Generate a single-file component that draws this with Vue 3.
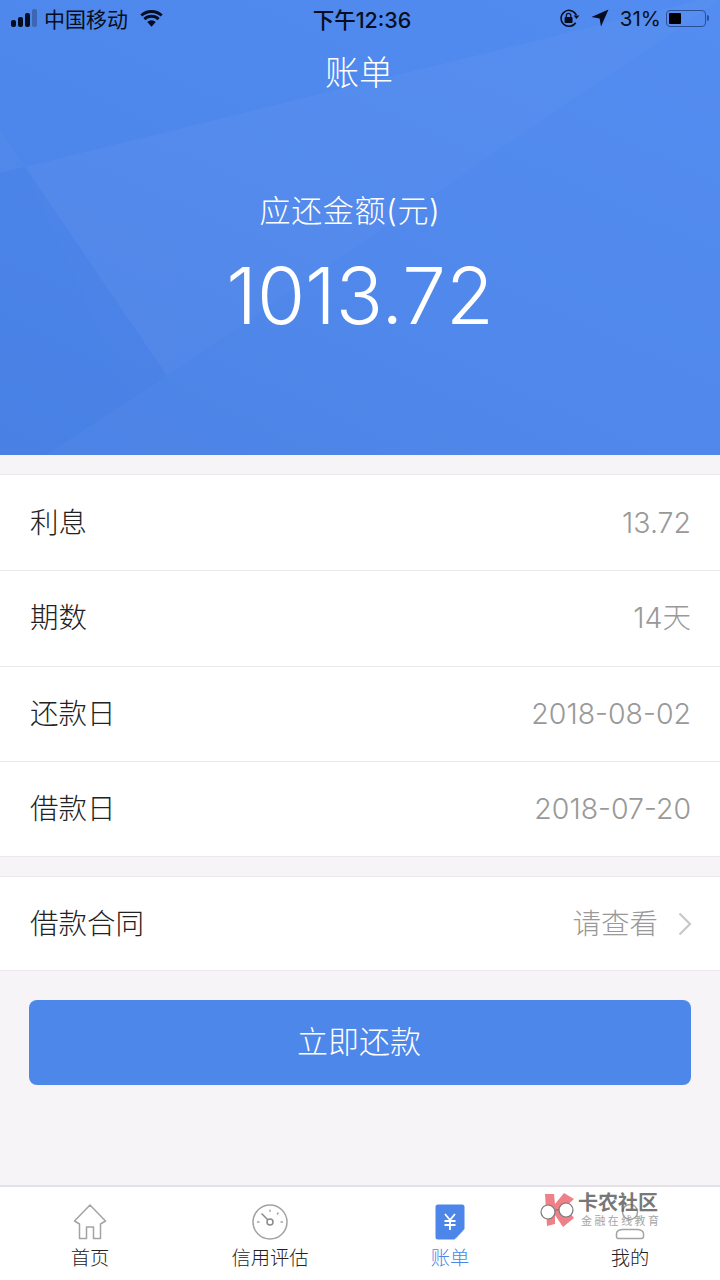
<script setup>
const rows = [
  { label: "利息", value: "13.72" },
  { label: "期数", value: "14天" },
  { label: "还款日", value: "2018-08-02" },
  { label: "借款日", value: "2018-07-20" },
];
</script>

<template>
  <div class="page">
    <header class="hero">
      <svg class="hero-bg" viewBox="0 0 720 455" preserveAspectRatio="none">
        <polygon points="25,167 700,0 720,0 167,376" fill="#fff" opacity="0.03" />
        <polygon points="0,130 25,167 0,173" fill="#fff" opacity="0.02" />
        <polygon points="0,173 25,167 167,376 45,455 0,455" fill="#2f6ad8" opacity="0.05" />
        <polygon points="720,0 167,376 45,455 720,455" fill="#fff" opacity="0.012" />
        <polygon points="175,130 175,340 167,376 130,400 25,167" fill="#fff" opacity="0.006" />
      </svg>

      <div class="status">
        <div class="status-left">
          <span class="signal"><i></i><i></i><i></i><i class="off"></i></span>
          <span class="carrier">中国移动</span>
          <svg class="wifi" viewBox="0 0 26 18">
            <path d="M13 18 L8.6 13.2 A6.4 6.4 0 0 1 17.4 13.2 Z" fill="#070d20" />
            <path d="M5.6 10.2 A10.6 10.6 0 0 1 20.4 10.2 M2.4 6.4 A15.4 15.4 0 0 1 23.6 6.4" fill="none" stroke="#070d20" stroke-width="3" />
          </svg>
        </div>
        <div class="clock">下午12:36</div>
        <div class="status-right">
          <svg class="lock" viewBox="0 0 22 20">
            <path d="M17.5 14.5 A8.4 8.4 0 1 1 18.2 6.5" fill="none" stroke="#070d20" stroke-width="1.6" />
            <path d="M15.4 6.8 L21.4 6.8 L18.4 10.6 Z" fill="#070d20" />
            <rect x="5.8" y="8.4" width="8.4" height="6.4" rx="1" fill="#070d20" />
            <path d="M7.6 8.6 V7 A2.4 2.4 0 0 1 12.4 7 V8.6" fill="none" stroke="#070d20" stroke-width="1.3" />
          </svg>
          <svg class="arrow" viewBox="0 0 18 18">
            <path d="M17.5 0.5 L0.5 8 L8.6 9.4 L10 17.5 Z" fill="#070d20" />
          </svg>
          <span class="percent">31%</span>
          <span class="battery"><span class="battery-fill"></span></span>
          <span class="battery-cap"></span>
        </div>
      </div>

      <h1 class="title">账单</h1>
      <div class="due-label">应还金额(元)</div>
      <div class="due-amount">1013.72</div>
    </header>

    <section class="group first">
      <div v-for="row in rows" :key="row.label" class="row">
        <span class="row-label">{{ row.label }}</span>
        <span class="row-value">{{ row.value }}</span>
      </div>
    </section>

    <section class="group second">
      <div class="row">
        <span class="row-label">借款合同</span>
        <span class="row-value">请查看</span>
        <svg class="chevron" viewBox="0 0 14 24">
          <path d="M1.5 1.5 L12 12 L1.5 22.5" fill="none" stroke="#c8c8c8" stroke-width="2.2" />
        </svg>
      </div>
    </section>

    <button class="pay"><span>立即还款</span></button>

    <nav class="tabbar">
      <div class="tab">
        <svg class="tab-icon" viewBox="0 0 34 36">
          <path d="M17 1 L32.5 17 L27.5 20 V34.5 H20.5 V23 H13.5 V34.5 H6.5 V20 L1.5 17 Z" fill="none" stroke="#a3a3a3" stroke-width="1.5" stroke-linejoin="round" />
        </svg>
        <span>首页</span>
      </div>
      <div class="tab">
        <svg class="tab-icon" viewBox="0 0 36 36">
          <circle cx="18" cy="18" r="17" fill="none" stroke="#a3a3a3" stroke-width="1.5" />
          <circle cx="18" cy="18" r="3" fill="none" stroke="#8a8a8a" stroke-width="1.5" />
          <path d="M15.8 15.8 L9.5 9.5" stroke="#8a8a8a" stroke-width="1.5" />
          <path d="M18 5.5 V8 M26.5 8.5 L25 10.5 M31 18 H28.5 M5 18 H7.5" stroke="#a3a3a3" stroke-width="1.3" />
        </svg>
        <span>信用评估</span>
      </div>
      <div class="tab active">
        <svg class="tab-icon" viewBox="0 0 30 36">
          <path d="M3 0.5 H27 A2.5 2.5 0 0 1 29.5 3 V25 L19.5 35.5 H3 A2.5 2.5 0 0 1 0.5 33 V3 A2.5 2.5 0 0 1 3 0.5 Z" fill="#4c86e8" />
          <path d="M28 27 L21 27.5 L21 35 Z" fill="#4c86e8" opacity="0.35" />
          <path d="M10 10 L15 16 L20 10 M15 16 V26 M9.5 17 H20.5 M9.5 21 H20.5" fill="none" stroke="#fff" stroke-width="1.8" />
        </svg>
        <span>账单</span>
      </div>
      <div class="tab">
        <svg class="tab-icon" viewBox="0 0 30 36">
          <circle cx="15" cy="8" r="7.5" fill="none" stroke="#a3a3a3" stroke-width="1.5" />
          <path d="M8 25.5 H22 A6.5 4 0 0 1 28.5 29.5 V32 A2 2 0 0 1 26.5 34.5 H3.5 A2 2 0 0 1 1.5 32 V29.5 A6.5 4 0 0 1 8 25.5 Z" fill="none" stroke="#a3a3a3" stroke-width="1.5" />
        </svg>
        <span>我的</span>
      </div>

      <div class="watermark">
        <svg class="wm-logo" viewBox="0 0 36 36">
          <path d="M5 1 H14 L15 11 L24 0 L34 6 L25 14 L34 25 L23 34 L15 22 L15 31 L7 33 Z" fill="#ee6f78" />
          <circle cx="8" cy="19" r="7" fill="#fff" stroke="#666" stroke-width="1.2" />
          <circle cx="26" cy="17" r="7" fill="#fff" stroke="#666" stroke-width="1.2" />
          <path d="M15 18 Q17 16 19 17" fill="none" stroke="#666" stroke-width="1.2" />
        </svg>
        <div class="wm-text">
          <div class="wm-name">卡农社区</div>
          <div class="wm-sub">金融在线教育</div>
        </div>
      </div>
    </nav>
  </div>
</template>

<style scoped>
.page {
  position: relative;
  width: 720px;
  height: 1280px;
  overflow: hidden;
  display: flex;
  flex-direction: column;
  background: #f7f4f8;
  font-family: Inter, "Noto Sans CJK SC", sans-serif;
}

.hero {
  position: relative;
  height: 455px;
  flex: none;
  display: flex;
  flex-direction: column;
  align-items: center;
  color: #fff;
  background: linear-gradient(25deg, #4a82e5 0%, #4e87eb 45%, #528cf1 100%);
}

.hero-bg {
  position: absolute;
  left: 0;
  top: 0;
  width: 100%;
  height: 100%;
}

.status {
  position: relative;
  align-self: stretch;
  height: 36px;
  display: flex;
  align-items: center;
  justify-content: space-between;
  padding: 0 11px;
  color: #070d20;
  font-size: 21px;
}

.status-left {
  width: 240px;
  display: flex;
  align-items: center;
}

.signal {
  display: flex;
  align-items: flex-end;
  gap: 2px;
  height: 18px;
  margin-right: 7px;
}

.signal i {
  width: 5px;
  border-radius: 2px;
  background: #070d20;
}

.signal i:nth-child(1) { height: 7px; }
.signal i:nth-child(2) { height: 10px; }
.signal i:nth-child(3) { height: 14px; }
.signal i:nth-child(4) { height: 18px; }
.signal i.off { background: #3d66b4; }

.wifi {
  width: 25px;
  height: 18px;
  margin-left: 11px;
}

.clock {
  font-size: 21.5px;
  font-weight: 500;
  margin-left: 4px;
}

.status-right {
  width: 240px;
  display: flex;
  align-items: center;
  justify-content: flex-end;
}

.lock {
  width: 21px;
  height: 19px;
  margin-right: 11px;
}

.arrow {
  width: 18px;
  height: 18px;
  margin-right: 11px;
}

.percent {
  font-size: 20.5px;
  margin-right: 5px;
}

.battery {
  width: 40px;
  height: 17px;
  display: flex;
  padding: 2px;
  box-sizing: border-box;
  border: 1px solid #2a4f96;
  border-radius: 4px;
}

.battery-fill {
  width: 12px;
  background: #000;
  border-radius: 1px;
}

.battery-cap {
  width: 2px;
  height: 6px;
  margin-left: 1px;
  background: #2a4f96;
  border-radius: 0 2px 2px 0;
}

.title {
  position: relative;
  margin: 14px 2px 0 0;
  font-size: 34px;
  line-height: 46px;
  font-weight: 300;
}

.due-label {
  position: relative;
  margin: 93px 20px 0 0;
  font-size: 31px;
  line-height: 44px;
  font-weight: 300;
  letter-spacing: 0.6px;
}

.due-amount {
  position: relative;
  margin-top: 17px;
  font-size: 78px;
  line-height: 92px;
  font-weight: 300;
}

.group {
  background: #fff;
  border-top: 1px solid #ece9ee;
  border-bottom: 1px solid #ece9ee;
}

.first { margin-top: 19px; }
.second { margin-top: 19px; }

.row {
  height: 95.25px;
  box-sizing: border-box;
  padding: 0 29px 0 30px;
  display: flex;
  align-items: center;
  border-top: 1px solid #ece9ee;
}

.row:first-child { border-top: 0; }
.second .row { height: 93px; padding-right: 28px; }

.row-label {
  flex: 1;
  color: #222;
  font-size: 28.5px;
  line-height: 40px;
  font-weight: 300;
}

.row-value {
  color: #999;
  font-size: 28.5px;
  line-height: 40px;
  font-weight: 300;
}

.chevron {
  width: 14px;
  height: 24px;
  margin-left: 20px;
}

.pay {
  margin: 29px 29px 0;
  height: 85px;
  flex: none;
  border: 0;
  border-radius: 8px;
  background: #4d87e9;
  color: #fff;
  font-family: inherit;
  font-size: 31px;
  font-weight: 300;
  padding: 0 2px 6px 0;
}

.tabbar {
  position: absolute;
  left: 0;
  right: 0;
  bottom: 0;
  height: 95px;
  display: grid;
  grid-template-columns: repeat(4, 1fr);
  background: #fff;
  border-top: 2px solid #e4e2e6;
  box-sizing: border-box;
}

.tab {
  display: flex;
  flex-direction: column;
  align-items: center;
  color: #222;
  font-size: 19.3px;
  font-weight: 300;
  padding-top: 17px;
}

.tab span {
  line-height: 26px;
  margin-top: 5px;
}

.tab.active { color: #4c86e8; }

.tab-icon {
  width: 36px;
  height: 36px;
}

.watermark {
  position: absolute;
  left: 540px;
  top: 6px;
  display: flex;
  gap: 2px;
  opacity: 0.88;
}

.wm-logo {
  width: 36px;
  height: 36px;
}

.wm-name {
  color: #666;
  font-size: 20px;
  line-height: 20px;
  font-weight: 700;
}

.wm-sub {
  color: #999;
  font-size: 11px;
  line-height: 16px;
  letter-spacing: 2.4px;
  margin-left: 3px;
}
</style>
